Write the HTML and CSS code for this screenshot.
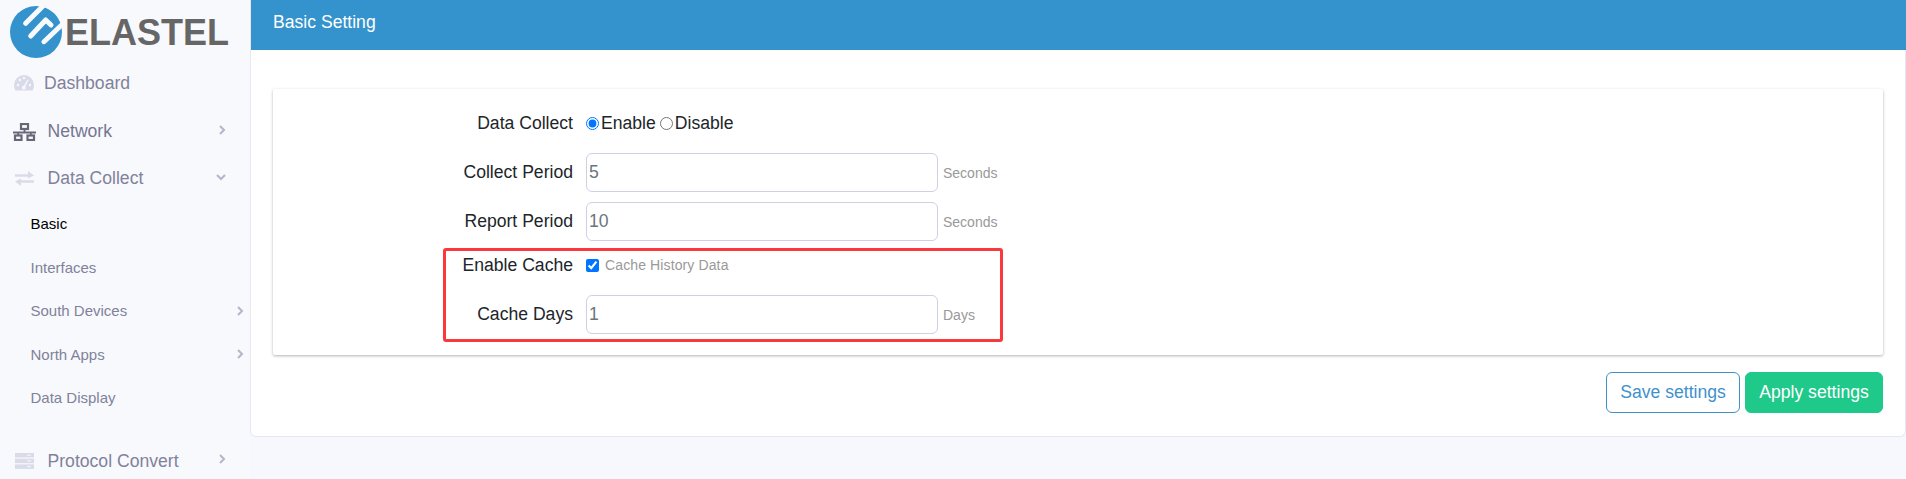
FILE: index.html
```html
<!DOCTYPE html>
<html lang="en">
<head>
<meta charset="utf-8">
<title>Basic Setting</title>
<link rel="stylesheet" href="styles.css">
</head>
<body>
<div class="app">
  <aside class="sidebar">
    <div class="brand">
      <svg class="brand-mark" viewBox="0 0 52 52" width="52" height="52" aria-hidden="true">
        <circle cx="26" cy="26" r="26" fill="#3492cd"/>
        <g stroke="#f8f9fd" stroke-width="5" stroke-linecap="round" fill="none" stroke-linejoin="round">
          <path d="M15.700 17.300L38 -5"/>
          <path d="M20.700 30L35.700 14L41 19"/>
          <path d="M34 35.700L58 13"/>
        </g>
      </svg>
      <span class="brand-name">ELASTEL</span>
    </div>
    <nav class="nav">
      <a class="nav-item nav-dash">
        <svg class="nav-icon" viewBox="0 0 20 16" width="20" height="16" aria-hidden="true">
          <path d="M10 0a10 10 0 0 0-10 10c0 2 .5 4 1.500 5.500h17c1-1.500 1.500-3.500 1.500-5.500a10 10 0 0 0-10-10z" fill="#d9dbe9"/>
          <g fill="#f8f9fd"><circle cx="4" cy="10" r="1.200"/><circle cx="6" cy="5" r="1.200"/><circle cx="10" cy="3" r="1.200"/><circle cx="16" cy="10" r="1.200"/><path d="M13.500 4.500l1 .5-3.200 6.500a1.800 1.800 0 1 1-1.400-.7z"/></g>
        </svg>
        <span>Dashboard</span>
      </a>
      <a class="nav-item nav-net">
        <span class="icon-slot">
          <svg viewBox="0 0 23 18" width="23" height="18" aria-hidden="true">
            <g fill="none" stroke="#666878" stroke-width="2.200"><rect x="8" y="1" width="7" height="5"/><rect x="2" y="12.500" width="6.500" height="4.500"/><rect x="14.500" y="12.500" width="6.500" height="4.500"/></g>
            <path d="M11.500 6v3.500M0 9.500h23M5.200 9.500v3M17.800 9.500v3" stroke="#666878" stroke-width="1.800" fill="none"/>
          </svg>
        </span>
        <span>Network</span>
        <svg class="chev" viewBox="0 0 8 10" width="8" height="10" aria-hidden="true"><path d="M2 1l4 4-4 4" fill="none" stroke="#b4b6c9" stroke-width="2"/></svg>
      </a>
      <a class="nav-item">
        <span class="icon-slot">
          <svg viewBox="0 0 19 15" width="19" height="15" aria-hidden="true">
            <path d="M0 4.500h15M19 10.500H4" stroke="#d9dbe9" stroke-width="2.500" fill="none"/>
            <path d="M13 0l6 4.500-6 3zM6 15l-6-4.500 6-3z" fill="#d9dbe9"/>
          </svg>
        </span>
        <span>Data Collect</span>
        <svg class="chev" viewBox="0 0 10 8" width="10" height="8" aria-hidden="true"><path d="M1 2l4 4 4-4" fill="none" stroke="#b4b6c9" stroke-width="2"/></svg>
      </a>
      <ul class="subnav">
        <li class="sub-item active">Basic</li>
        <li class="sub-item">Interfaces</li>
        <li class="sub-item">South Devices<svg class="chev" viewBox="0 0 8 10" width="8" height="10" aria-hidden="true"><path d="M2 1l4 4-4 4" fill="none" stroke="#b4b6c9" stroke-width="2"/></svg></li>
        <li class="sub-item">North Apps<svg class="chev" viewBox="0 0 8 10" width="8" height="10" aria-hidden="true"><path d="M2 1l4 4-4 4" fill="none" stroke="#b4b6c9" stroke-width="2"/></svg></li>
        <li class="sub-item">Data Display</li>
      </ul>
      <a class="nav-item">
        <span class="icon-slot">
          <svg viewBox="0 0 19 16" width="19" height="16" aria-hidden="true">
            <g fill="#d9dbe9"><rect y="0" width="19" height="4.500"/><rect y="5.700" width="19" height="4.500"/><rect y="11.400" width="19" height="4.500"/></g>
            <g fill="#f8f9fd"><rect x="12" y="1.700" width="4" height="1"/><rect x="12" y="7.400" width="4" height="1"/><rect x="12" y="13.100" width="4" height="1"/></g>
          </svg>
        </span>
        <span>Protocol Convert</span>
        <svg class="chev" viewBox="0 0 8 10" width="8" height="10" aria-hidden="true"><path d="M2 1l4 4-4 4" fill="none" stroke="#b4b6c9" stroke-width="2"/></svg>
      </a>
    </nav>
  </aside>
  <main class="main">
    <section class="panel">
      <header class="panel-head">Basic Setting</header>
      <div class="panel-body">
        <form class="card">
          <div class="row row-radio">
            <span class="label">Data Collect</span>
            <div class="field">
              <label class="choice"><input type="radio" name="dc" checked>Enable</label>
              <label class="choice"><input type="radio" name="dc">Disable</label>
            </div>
          </div>
          <div class="row">
            <span class="label">Collect Period</span>
            <div class="field"><input class="text" type="text" value="5"><span class="hint">Seconds</span></div>
          </div>
          <div class="row">
            <span class="label">Report Period</span>
            <div class="field"><input class="text" type="text" value="10"><span class="hint">Seconds</span></div>
          </div>
          <div class="row row-check">
            <span class="label">Enable Cache</span>
            <div class="field"><input class="check" type="checkbox" checked><span class="hint hint-wide">Cache History Data</span></div>
          </div>
          <div class="row">
            <span class="label">Cache Days</span>
            <div class="field"><input class="text" type="text" value="1"><span class="hint">Days</span></div>
          </div>
          <div class="highlight"></div>
        </form>
        <div class="actions">
          <button class="btn btn-save" type="button">Save settings</button>
          <button class="btn btn-apply" type="button">Apply settings</button>
        </div>
      </div>
    </section>
  </main>
</div>
</body>
</html>
```

FILE: styles.css
```css
* { box-sizing: border-box; }
html, body { margin: 0; padding: 0; height: 100%; overflow: hidden; }
body { font-family: "Liberation Sans", Arial, sans-serif; background: #f7f8fd; color: #212529; }

.app { display: flex; height: 479px; }

/* Sidebar */
.sidebar { width: 250px; flex: none; background: #f8f9fd; }
.brand { display: flex; align-items: center; gap: 3px; height: 64px; padding: 0 0 0 10px; }
.brand-mark { flex: none; }
.brand-name { font-size: 36px; font-weight: 700; color: #666; line-height: 1; margin-top: 2px; }
.nav { display: flex; flex-direction: column; }
.nav-item { display: flex; align-items: center; height: 47px; padding: 0 24px 0 12px; font-size: 17.600px; color: #80829a; }
.nav-dash { height: 38px; margin-bottom: 6px; padding-left: 14px; }
.nav-dash .nav-icon { margin-right: 10px; }
.nav-net { color: #747691; }
.icon-slot { width: 24px; margin-right: 11.500px; display: flex; justify-content: center; flex: none; }
.nav-item .chev { margin-left: auto; margin-bottom: 4px; }
.subnav { list-style: none; margin: 0 0 18px; padding: 0; }
.sub-item { display: flex; align-items: center; height: 43.500px; padding: 0 6px 0 30.500px; font-size: 15px; color: #80829a; }
.sub-item.active { color: #000; }
.sub-item .chev { margin-left: auto; }

/* Main */
.main { flex: 1; min-width: 0; }
.panel { height: 437px; background: #fff; border: 1px solid #e6e7f3; border-width: 0 1px 1px 1px; border-radius: 0 0 6px 6px; }
.panel-head { height: 50px; background: #3492cd; color: #fff; font-size: 17.600px; line-height: 44px; padding-left: 22px; margin: 0 -1px 0 0; }
.panel-body { padding: 39px 22px 0 22px; }

.card { position: relative; height: 266px; padding-top: 17px; background: #fff; border-radius: 2px; box-shadow: 0 1px 3px rgba(0, 0, 0, .3); }
.row { display: flex; align-items: center; height: 39px; margin-bottom: 10px; font-size: 17.600px; }
.row-radio { height: 34px; margin-bottom: 13px; }
.row-check { height: 35px; margin-bottom: 9px; align-items: flex-start; }
.label { width: 300px; flex: none; text-align: right; }
.field { display: flex; align-items: center; margin-left: 13px; }
.row-check .label { line-height: 28px; }
.row-check .field { height: 28px; }

.choice { display: inline-flex; align-items: center; margin-right: 4px; }
.choice input { margin: 0 2px 0 0; width: 13px; height: 13px; }
.check { margin: 0 6px 0 0; width: 13px; height: 13px; }
.text { width: 352px; height: 39px; padding: 0 2px; border: 1px solid #cfd0e4; border-radius: 6px; font: 17.600px "Liberation Sans", Arial, sans-serif; color: #6c757d; background: #fff; }
.hint { font-size: 14px; color: #999; margin-left: 5px; }
.row-check .hint { margin-left: 0; }
.hint-wide { letter-spacing: .12px; }

.highlight { position: absolute; left: 170px; top: 159px; width: 560px; height: 94px; border: 3px solid #f9393c; border-radius: 3px; pointer-events: none; }

.actions { display: flex; justify-content: flex-end; gap: 5px; margin-top: 17px; }
.btn { height: 41px; border-radius: 6px; font: 17.600px "Liberation Sans", Arial, sans-serif; padding: 0; }
.btn-save { width: 134px; background: #fff; border: 1px solid #3f91cb; color: #3f91cb; }
.btn-apply { width: 138px; background: #1fc98a; border: 1px solid #1fc98a; color: #fff; }
```
